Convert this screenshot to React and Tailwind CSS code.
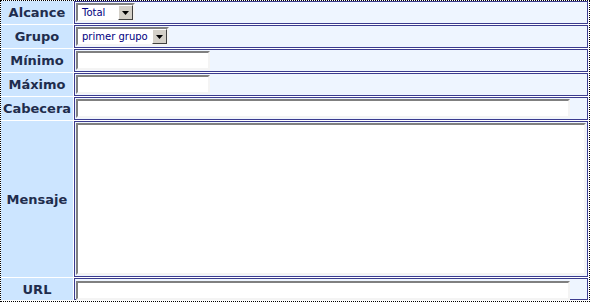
import React from 'react';

const label = "bg-[#cce5ff] flex items-center justify-center font-bold text-[13px] text-[#1f2d4d] leading-none";
const cell = "bg-[#eef5ff] border border-[#3b3b8f] flex items-center px-px";
const inset = "border-2 border-t-[#808080] border-l-[#808080] border-b-[#f4f4f4] border-r-[#f4f4f4] bg-white";

const Select = ({ value, className }) => (
    <div className={`${inset} ${className} h-[19px] flex items-center justify-between`}>
        <span className="pl-[4px] text-[10px] text-[#000080] leading-none whitespace-nowrap">{value}</span>
        <span className="w-[15px] h-[15px] shrink-0 bg-[#d4d0c8] border border-t-white border-l-white border-b-[#404040] border-r-[#404040] flex items-center justify-center">
            <svg width="7" height="4" viewBox="0 0 7 4">
                <path d="M0,0 L7,0 L3.5,4 Z" fill="#000" />
            </svg>
        </span>
    </div>
);

const Field = ({ className }) => (
    <input readOnly className={`${inset} ${className} h-[19px] outline-none`} />
);

const App = () => {
    return (
        <div className="w-[590px] h-[302px] border border-dotted border-black bg-white font-['DejaVu_Sans',sans-serif]">
            <div className="grid grid-cols-[72px_514px] grid-rows-[23px_23px_23px_23px_23px_156px_22px] gap-px">
                {/* Alcance */}
                <div className={label}>Alcance</div>
                <div className={cell}>
                    <Select value="Total" className="w-[59px]" />
                </div>

                {/* Grupo */}
                <div className={label}>Grupo</div>
                <div className={cell}>
                    <Select value="primer grupo" className="w-[93px]" />
                </div>

                {/* Min / Max */}
                <div className={label}>Mínimo</div>
                <div className={cell}>
                    <Field className="w-[134px]" />
                </div>
                <div className={label}>Máximo</div>
                <div className={cell}>
                    <Field className="w-[134px]" />
                </div>

                {/* Cabecera */}
                <div className={label}>Cabecera</div>
                <div className={cell}>
                    <Field className="w-[494px]" />
                </div>

                {/* Mensaje */}
                <div className={label}>Mensaje</div>
                <div className={`${cell} py-px`}>
                    <textarea readOnly className={`${inset} w-[510px] h-[152px] resize-none outline-none`} />
                </div>

                {/* URL */}
                <div className={label}>URL</div>
                <div className={`${cell} items-start pt-[2px]`}>
                    <Field className="w-[494px] h-[18px]" />
                </div>
            </div>
        </div>
    );
};

export default App;
